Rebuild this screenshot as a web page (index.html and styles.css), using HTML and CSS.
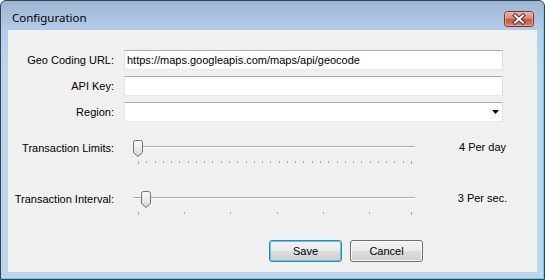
FILE: index.html
```html
<!DOCTYPE html>
<html>
<head>
<meta charset="utf-8">
<link rel="stylesheet" href="styles.css">
</head>
<body>
<div class="window">
  <div class="titlebar">
    <span class="title">Configuration</span>
    <svg class="close" width="30" height="16" viewBox="0 0 30 16">
      <defs>
        <linearGradient id="cg" x1="0" y1="0" x2="0" y2="1">
          <stop offset="0" stop-color="#eab3a5"/>
          <stop offset="0.45" stop-color="#d88f7d"/>
          <stop offset="0.5" stop-color="#c9543e"/>
          <stop offset="1" stop-color="#d8826c"/>
        </linearGradient>
      </defs>
      <rect x="0.5" y="0.5" width="29" height="15" rx="3" fill="url(#cg)" stroke="#6e3429"/>
      <rect x="1.5" y="1.5" width="27" height="13" rx="2" fill="none" stroke="#f1c6bb" stroke-opacity="0.6"/>
      <path d="M11 4.5 L19 11.5 M19 4.5 L11 11.5" stroke="#5b2a22" stroke-width="4" stroke-linecap="square"/>
      <path d="M11 4.5 L19 11.5 M19 4.5 L11 11.5" stroke="#ffffff" stroke-width="2" stroke-linecap="square"/>
    </svg>
  </div>
  <div class="client">
    <div class="form">
      <div class="label">Geo Coding URL:</div>
      <div class="textbox">https://maps.googleapis.com/maps/api/geocode</div>
      <div class="label">API Key:</div>
      <div class="textbox"></div>
      <div class="label">Region:</div>
      <div class="textbox combo">
        <svg class="arrow" width="7" height="4" viewBox="0 0 7 4"><path d="M0 0 H7 L3.5 4 Z" fill="#000"/></svg>
      </div>
    </div>

    <div class="slider-row first">
      <div class="slabel">Transaction Limits:</div>
      <svg class="track" width="282" height="26" viewBox="0 0 282 26">
        <defs>
          <linearGradient id="tg" x1="0" y1="0" x2="0" y2="1">
            <stop offset="0" stop-color="#fdfdfd"/>
            <stop offset="0.6" stop-color="#e6e6e6"/>
            <stop offset="1" stop-color="#d2d2d2"/>
          </linearGradient>
        </defs>
        <rect x="0" y="6" width="282" height="1" fill="#acacac"/>
        <rect x="0" y="7" width="282" height="1" fill="#ffffff"/>
        <path d="M5.5 21v3 M13.5 21v2 M22.5 21v2 M30.5 21v2 M38.5 21v2 M46.5 21v2 M55.5 21v2 M63.5 21v2 M71.5 21v2 M79.5 21v2 M88.5 21v2 M96.5 21v2 M104.5 21v2 M113.5 21v2 M121.5 21v2 M129.5 21v2 M137.5 21v2 M146.5 21v2 M154.5 21v2 M162.5 21v2 M170.5 21v2 M179.5 21v2 M187.5 21v2 M195.5 21v2 M204.5 21v2 M212.5 21v2 M220.5 21v2 M228.5 21v2 M237.5 21v2 M245.5 21v2 M253.5 21v2 M261.5 21v2 M270.5 21v2 M278.5 21v3" stroke="#a3a3a3" stroke-width="1"/>
        <g transform="translate(0,0)">
          <path d="M0.5 2.5 Q0.5 0.5 2.5 0.5 H7.5 Q9.5 0.5 9.5 2.5 V12.5 L5 16.5 L0.5 12.5 Z" fill="url(#tg)" stroke="#727272"/>
        </g>
      </svg>
      <div class="value">4 Per day</div>
    </div>

    <div class="slider-row second">
      <div class="slabel">Transaction Interval:</div>
      <svg class="track" width="282" height="26" viewBox="0 0 282 26">
        <defs>
          <linearGradient id="tg2" x1="0" y1="0" x2="0" y2="1">
            <stop offset="0" stop-color="#fdfdfd"/>
            <stop offset="0.6" stop-color="#e6e6e6"/>
            <stop offset="1" stop-color="#d2d2d2"/>
          </linearGradient>
        </defs>
        <rect x="0" y="6" width="282" height="1" fill="#acacac"/>
        <rect x="0" y="7" width="282" height="1" fill="#ffffff"/>
        <path d="M5.5 21v3 M51.5 21v2 M97.5 21v2 M144.5 21v2 M190.5 21v2 M236.5 21v2 M278.5 21v3" stroke="#a3a3a3" stroke-width="1"/>
        <g transform="translate(8,0)">
          <path d="M0.5 2.5 Q0.5 0.5 2.5 0.5 H7.5 Q9.5 0.5 9.5 2.5 V12.5 L5 16.5 L0.5 12.5 Z" fill="url(#tg2)" stroke="#727272"/>
        </g>
      </svg>
      <div class="value">3 Per sec.</div>
    </div>

    <div class="buttons">
      <div class="btn default">Save</div>
      <div class="btn">Cancel</div>
    </div>
  </div>
</div>
</body>
</html>
```

FILE: styles.css
```css
html, body {
  margin: 0;
  padding: 0;
  background: #ffffff;
}

.window {
  box-sizing: border-box;
  width: 545px;
  height: 280px;
  border: 1px solid #34414f;
  border-radius: 6px 6px 0 0;
  background: linear-gradient(to bottom, #9cb6d4 0px, #b3cbe6 28px, #bcd4ed 60px, #bcd4ed 100%);
  box-shadow: inset -1px -1px 0 #5bd1ee;
  display: flex;
  flex-direction: column;
}

.titlebar {
  height: 29px;
  display: flex;
  justify-content: space-between;
  align-items: flex-start;
  padding: 0 10px 0 11px;
}

.title {
  margin-top: 9px;
  font-family: "Noto Sans", "Open Sans", sans-serif;
  font-size: 11.5px;
  line-height: 16px;
  color: #000000;
}

.close {
  display: block;
  margin-top: 10px;
}

.client {
  margin: 0 7px;
  height: 242px;
  background: #f0f0f0;
  font-family: "Liberation Sans", Arial, sans-serif;
  font-size: 11px;
  color: #000000;
  padding-top: 20px;
  box-sizing: border-box;
}

.form {
  display: grid;
  grid-template-columns: 106px 379px;
  grid-auto-rows: 20px;
  column-gap: 10px;
  row-gap: 6px;
}

.label {
  text-align: right;
  line-height: 20px;
  white-space: nowrap;
}

.textbox {
  box-sizing: border-box;
  height: 20px;
  background: #ffffff;
  border-style: solid;
  border-width: 1px;
  border-color: #abadb3 #dbdfe6 #e3e9ef #e2e3ea;
  padding-left: 2px;
  line-height: 18px;
  white-space: nowrap;
  overflow: hidden;
}

.combo {
  display: flex;
  justify-content: flex-end;
  align-items: center;
  padding-right: 3px;
}

.arrow {
  display: block;
}

.slider-row {
  display: flex;
  align-items: flex-start;
}

.slider-row.first {
  margin-top: 18px;
}

.slider-row.second {
  margin-top: 25px;
}

.slabel {
  width: 106px;
  text-align: right;
  line-height: 17px;
  white-space: nowrap;
}

.track {
  display: block;
  margin-left: 19px;
}

.value {
  width: 105px;
  margin-left: 15px;
  text-align: center;
  line-height: 14px;
  white-space: nowrap;
}

.buttons {
  display: flex;
  gap: 8px;
  margin-top: 23px;
  padding-left: 261px;
}

.btn {
  box-sizing: border-box;
  width: 73px;
  height: 22px;
  border: 1px solid #707070;
  border-radius: 3px;
  background: linear-gradient(to bottom, #f2f2f2 0%, #ebebeb 50%, #dddddd 51%, #cfcfcf 100%);
  box-shadow: inset 0 0 0 1px #fcfcfc;
  text-align: center;
  line-height: 20px;
}

.btn.default {
  border-color: #3c7fb1;
  box-shadow: inset 0 0 0 1px #48d0f4;
}
```
